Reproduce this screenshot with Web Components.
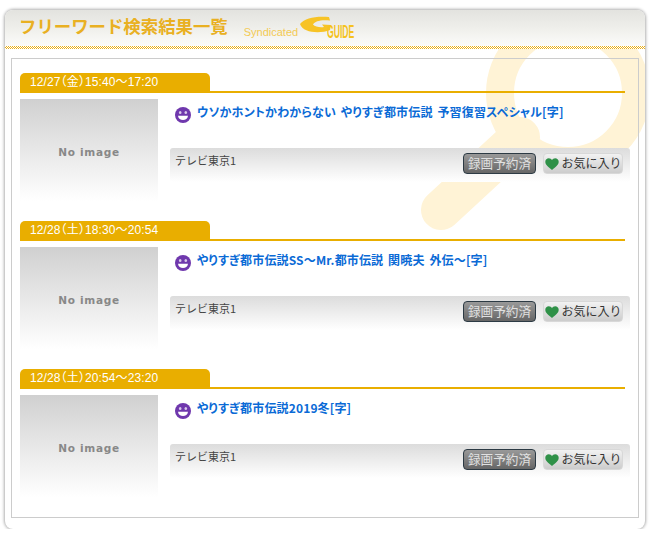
<!DOCTYPE html>
<html lang="ja"><head><meta charset="utf-8"><title>フリーワード検索結果一覧</title>
<style>
html,body{margin:0;background:#fff;font-family:"Noto Sans CJK JP","Liberation Sans",sans-serif}
</style></head><body>
<search-results>
<tv-program date="12/27（金）15:40～17:20" title="ウソかホントかわからない やりすぎ都市伝説 予習復習スペシャル[字]" channel="テレビ東京1"></tv-program>
<tv-program date="12/28（土）18:30～20:54" title="やりすぎ都市伝説SS～Mr.都市伝説 関暁夫 外伝～[字]" channel="テレビ東京1"></tv-program>
<tv-program date="12/28（土）20:54～23:20" title="やりすぎ都市伝説2019冬[字]" channel="テレビ東京1"></tv-program>
</search-results>
<template id="results-t">
<style>
:host{display:block;box-sizing:border-box;width:640px;height:519px;margin:10px 0 0 5px;background:#fff;border-radius:8px;box-shadow:0 0 3px 1px #b0b0b0;position:relative;overflow:hidden}
.mark{position:absolute;left:0;top:0;width:640px;height:519px;pointer-events:none}
header{position:relative;box-sizing:border-box;height:36px;display:flex;align-items:flex-start;padding:4px 0 0 14px;background:linear-gradient(#e3e3df,#f0f0ec 55%,#fbfbfa)}
h1{margin:0;font:700 17.4px/24px "Noto Sans CJK JP",sans-serif;color:#e9b022}
.synd{font:11px/14px "Liberation Sans",sans-serif;color:#f3ca55;margin:11px 0 0 16px}
.logo{display:block;height:24px;position:relative;width:57px}
.logo svg{position:absolute;left:2px;top:2px}
.logo b{position:absolute;left:29px;top:9px;font:bold 18px/18px "Liberation Sans",sans-serif;color:#f5c21e;transform:scaleX(.48);transform-origin:0 0}
.dots{position:relative;height:3px;background:repeating-conic-gradient(#e9ae1a 0 25%,#fff 0 50%) 0 0/2px 2px}
.panel{position:relative;box-sizing:border-box;margin:9px 6px 0 6px;height:460px;border:1px solid #ccc;padding:14px 0 0 8px}
</style>
<svg class="mark" viewBox="0 0 640 519" aria-hidden="true"><path d="M436 200L515 127" stroke="#fff3d6" stroke-width="40" stroke-linecap="round"/><circle cx="563" cy="83" r="68" fill="none" stroke="#fff3d6" stroke-width="28"/></svg>
<header><h1>フリーワード検索結果一覧</h1><span class="synd">Syndicated</span><span class="logo"><svg width="31" height="22" viewBox="0 0 31 22" aria-hidden="true"><path d="M0 8C5 2 15 0 29 1L30 4.500C21 3.500 15 5 13 8.500C15 11 20 11.500 24 11L22 8.500L31 9L30 14C20 18 3 17 0 8Z" fill="#f7c325"/></svg><b>GUIDE</b></span></header>
<div class="dots"></div>
<div class="panel"><slot></slot></div>
</template>
<template id="program-t">
<style>
:host{display:block;height:148px;font-family:"Noto Sans CJK JP",sans-serif}
.head{height:20px;width:605px;border-bottom:2px solid #e9ae00;box-sizing:border-box}
.tab{width:190px;height:18px;background:#e9ae00;border-radius:5px 5px 0 0;color:#fff;font:12px/19px "Liberation Sans","Noto Sans CJK JP",sans-serif;font-feature-settings:"halt";letter-spacing:.12px;padding-left:10px;box-sizing:border-box}
.row{display:flex;gap:12px;margin-top:6px}
.img{width:138px;height:102px;flex:none;background:linear-gradient(#d0d0d0,#fff);display:flex;align-items:center;justify-content:center;font:bold 10.5px "DejaVu Sans",sans-serif;letter-spacing:.7px;color:#888;padding-top:4px;box-sizing:border-box}
.main{width:460px;flex:none}
.title{display:flex;align-items:center;gap:6px;height:17px;margin:4px 0 0 5px}
.title svg{margin-top:6px;flex:none}
.title span{font:bold 12px/17px "Noto Sans CJK JP",sans-serif;font-feature-settings:"palt";word-spacing:2px;letter-spacing:.15px;color:#0a6ad6;white-space:nowrap}
.bar{margin-top:28px;height:34px;border-radius:3px;background:linear-gradient(#dcdcdc,#fff);display:flex;gap:7px;padding:5px 7px 0 5px;box-sizing:border-box;font-size:11px;color:#444}
.ch{flex:1;line-height:15px}
button{box-sizing:border-box;height:21px;padding:0 0 2px;border-radius:4px;display:flex;align-items:center;justify-content:center;font:13px/19px "Noto Sans CJK JP",sans-serif;white-space:nowrap}
.rec{width:73px;border:1px solid #2c3a44;background:linear-gradient(#999,#666);color:#e0e0e0;font-size:12.6px}
.fav{width:80px;border:1px solid #d8d8d8;background:linear-gradient(#f2f2f2,#cccccc);color:#333;gap:2px;font-size:12px;padding-left:1px}
.fav svg{margin-top:2px}
</style>
<div class="head"><div class="tab" id="d"></div></div>
<div class="row">
<div class="img">No image</div>
<div class="main">
<div class="title"><svg width="16" height="16" viewBox="0 0 16 16" aria-hidden="true"><circle cx="8" cy="8" r="8" fill="#6f38ad"/><ellipse cx="5.2" cy="5.6" rx="1.3" ry="1.5" fill="#d9c8ea"/><ellipse cx="10.8" cy="5.6" rx="1.3" ry="1.5" fill="#d9c8ea"/><path d="M3 8.700h10C12.600 11.600 10.600 13 8 13S3.400 11.600 3 8.700Z" fill="#fff"/></svg><span id="t"></span></div>
<div class="bar"><div class="ch" id="c"></div>
<button class="rec">録画予約済</button>
<button class="fav"><svg width="14" height="12" viewBox="0 0 14 12" aria-hidden="true"><path d="M7 12C3 9 .3 6.800.3 3.800.3 1.600 2 .3 3.800.3 5.200.3 6.300 1 7 2.200 7.700 1 8.800.3 10.200.3 12 .3 13.700 1.600 13.700 3.800 13.700 6.800 11 9 7 12Z" fill="#2f9148"/></svg>お気に入り</button>
</div></div></div>
</template>
<script>
class SearchResults extends HTMLElement{constructor(){super();this.attachShadow({mode:"open"}).append(document.getElementById("results-t").content.cloneNode(true))}}
class TvProgram extends HTMLElement{constructor(){super();const s=this.attachShadow({mode:"open"});s.append(document.getElementById("program-t").content.cloneNode(true))}
connectedCallback(){const s=this.shadowRoot;s.getElementById("d").textContent=this.getAttribute("date");s.getElementById("t").textContent=this.getAttribute("title");s.getElementById("c").textContent=this.getAttribute("channel")}}
customElements.define("search-results",SearchResults);customElements.define("tv-program",TvProgram);
</script>
</body></html>
